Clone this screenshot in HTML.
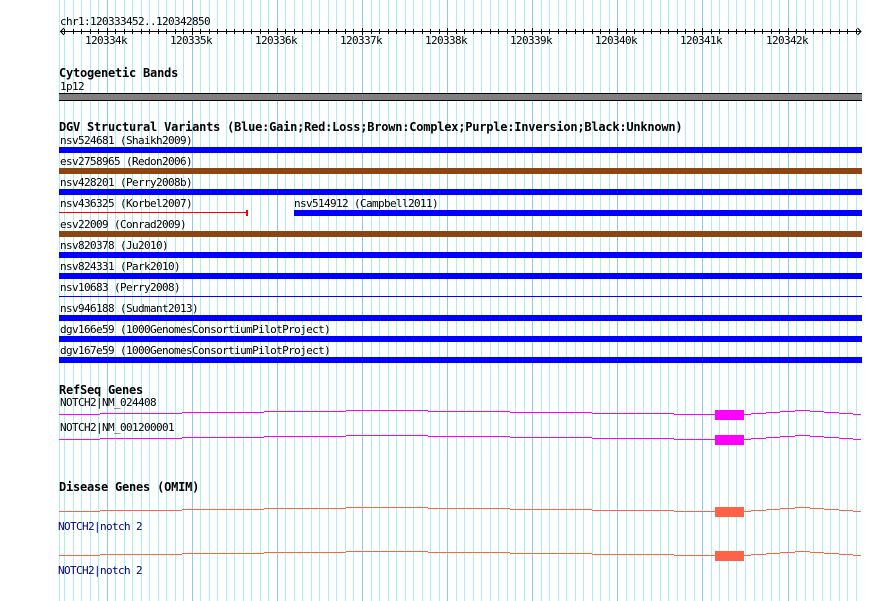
<!DOCTYPE html>
<html><head><meta charset="utf-8"><title>Genome browser</title>
<style>
html,body{margin:0;padding:0;background:#fff;width:890px;height:601px;overflow:hidden}
svg{display:block}
text{font-family:"DejaVu Sans Mono","Liberation Mono",monospace;font-size:11px;letter-spacing:-.62px;fill:#000;white-space:pre}
.b{font-weight:bold;font-size:12px;letter-spacing:-.22px}
.n{fill:#000080}
</style></head><body>
<svg width="890" height="601" viewBox="0 0 890 601" xmlns="http://www.w3.org/2000/svg">
<g shape-rendering="crispEdges" fill="none">
<path stroke="#afeeee" d="M59.5 0V601M64.5 0V601M73.5 0V601M81.5 0V601M90.5 0V601M98.5 0V601M115.5 0V601M124.5 0V601M132.5 0V601M141.5 0V601M149.5 0V601M158.5 0V601M166.5 0V601M175.5 0V601M183.5 0V601M200.5 0V601M209.5 0V601M217.5 0V601M226.5 0V601M234.5 0V601M243.5 0V601M251.5 0V601M260.5 0V601M268.5 0V601M285.5 0V601M294.5 0V601M302.5 0V601M311.5 0V601M319.5 0V601M328.5 0V601M336.5 0V601M345.5 0V601M353.5 0V601M371.5 0V601M379.5 0V601M388.5 0V601M396.5 0V601M405.5 0V601M413.5 0V601M422.5 0V601M430.5 0V601M439.5 0V601M456.5 0V601M464.5 0V601M473.5 0V601M481.5 0V601M490.5 0V601M498.5 0V601M507.5 0V601M515.5 0V601M524.5 0V601M541.5 0V601M549.5 0V601M558.5 0V601M566.5 0V601M575.5 0V601M583.5 0V601M592.5 0V601M600.5 0V601M609.5 0V601M626.5 0V601M634.5 0V601M643.5 0V601M651.5 0V601M660.5 0V601M668.5 0V601M677.5 0V601M685.5 0V601M694.5 0V601M711.5 0V601M719.5 0V601M728.5 0V601M736.5 0V601M745.5 0V601M754.5 0V601M762.5 0V601M771.5 0V601M779.5 0V601M796.5 0V601M805.5 0V601M813.5 0V601M822.5 0V601M830.5 0V601M839.5 0V601M847.5 0V601M856.5 0V601"/>
<path stroke="#87ceeb" d="M107.5 0V601M192.5 0V601M277.5 0V601M362.5 0V601M447.5 0V601M532.5 0V601M617.5 0V601M702.5 0V601M788.5 0V601"/>

<!-- ruler -->
<path stroke="#000" d="M60 31.5H861M64.5 29V34M73.5 29V34M81.5 29V34M90.5 29V34M98.5 29V34M107.5 28V35M115.5 29V34M124.5 29V34M132.5 29V34M141.5 29V34M149.5 29V34M158.5 29V34M166.5 29V34M175.5 29V34M183.5 29V34M192.5 28V35M200.5 29V34M209.5 29V34M217.5 29V34M226.5 29V34M234.5 29V34M243.5 29V34M251.5 29V34M260.5 29V34M268.5 29V34M277.5 28V35M285.5 29V34M294.5 29V34M302.5 29V34M311.5 29V34M319.5 29V34M328.5 29V34M336.5 29V34M345.5 29V34M353.5 29V34M362.5 28V35M371.5 29V34M379.5 29V34M388.5 29V34M396.5 29V34M405.5 29V34M413.5 29V34M422.5 29V34M430.5 29V34M439.5 29V34M447.5 28V35M456.5 29V34M464.5 29V34M473.5 29V34M481.5 29V34M490.5 29V34M498.5 29V34M507.5 29V34M515.5 29V34M524.5 29V34M532.5 28V35M541.5 29V34M549.5 29V34M558.5 29V34M566.5 29V34M575.5 29V34M583.5 29V34M592.5 29V34M600.5 29V34M609.5 29V34M617.5 28V35M626.5 29V34M634.5 29V34M643.5 29V34M651.5 29V34M660.5 29V34M668.5 29V34M677.5 29V34M685.5 29V34M694.5 29V34M702.5 28V35M711.5 29V34M719.5 29V34M728.5 29V34M736.5 29V34M745.5 29V34M754.5 29V34M762.5 29V34M771.5 29V34M779.5 29V34M788.5 28V35M796.5 29V34M805.5 29V34M813.5 29V34M822.5 29V34M830.5 29V34M839.5 29V34M847.5 29V34M856.5 29V34"/>
</g>
<path fill="none" stroke="#000" d="M64 28L60.5 31.5L64 35M857.5 28L861 31.5L857.5 35"/>

<g shape-rendering="crispEdges">
<!-- band -->
<rect x="59" y="94" width="803" height="7" fill="#808080"/>
<rect x="59" y="93" width="803" height="1" fill="#000"/>
<rect x="59" y="100" width="803" height="1" fill="#000"/>

<!-- DGV bars -->
<g fill="#0000ff">
<rect x="59" y="147" width="803" height="6"/>
<rect x="59" y="189" width="803" height="6"/>
<rect x="294" y="210" width="568" height="6"/>
<rect x="59" y="252" width="803" height="6"/>
<rect x="59" y="273" width="803" height="6"/>
<rect x="59" y="296" width="803" height="1"/>
<rect x="59" y="315" width="803" height="6"/>
<rect x="59" y="336" width="803" height="6"/>
<rect x="59" y="357" width="803" height="6"/>
</g>
<g fill="#8b4513">
<rect x="59" y="168" width="803" height="6"/>
<rect x="59" y="231" width="803" height="6"/>
</g>
<rect x="59" y="212" width="188" height="1" fill="#ff0000"/>
<rect x="246" y="210" width="2" height="6" fill="#ff0000"/>

<!-- RefSeq -->
<g fill="none" stroke="#ff00ff">
<path d="M59 414.5H100M100 413.5H182M182 412.5H264M264 411.5H346M346 410.5H428M428 411.5H510M510 412.5H592M592 413.5H674M674 414.5H715M744 414.5H751M751 413.5H766M766 412.5H780M780 411.5H795M795 410.5H810M810 411.5H824M824 412.5H839M839 413.5H853M853 414.5H861"/>
<path d="M59 439.5H100M100 438.5H182M182 437.5H264M264 436.5H346M346 435.5H428M428 436.5H510M510 437.5H592M592 438.5H674M674 439.5H715M744 439.5H751M751 438.5H766M766 437.5H780M780 436.5H795M795 435.5H810M810 436.5H824M824 437.5H839M839 438.5H853M853 439.5H861"/>
</g>
<rect x="715" y="410" width="29" height="10" fill="#ff00ff"/>
<rect x="715" y="435" width="29" height="10" fill="#ff00ff"/>

<!-- OMIM -->
<g fill="none" stroke="#ff6347">
<path d="M59 511.5H100M100 510.5H182M182 509.5H264M264 508.5H346M346 507.5H428M428 508.5H510M510 509.5H592M592 510.5H674M674 511.5H715M744 511.5H751M751 510.5H766M766 509.5H780M780 508.5H795M795 507.5H810M810 508.5H824M824 509.5H839M839 510.5H853M853 511.5H861"/>
<path d="M59 555.5H100M100 554.5H182M182 553.5H264M264 552.5H346M346 551.5H428M428 552.5H510M510 553.5H592M592 554.5H674M674 555.5H715M744 555.5H751M751 554.5H766M766 553.5H780M780 552.5H795M795 551.5H810M810 552.5H824M824 553.5H839M839 554.5H853M853 555.5H861"/>
</g>
<rect x="715" y="507" width="29" height="10" fill="#ff6347"/>
<rect x="715" y="551" width="29" height="10" fill="#ff6347"/>
</g>

<!-- text -->
<text x="60" y="25">chr1:120333452..120342850</text>
<text x="85" y="44">120334k</text>
<text x="170" y="44">120335k</text>
<text x="255" y="44">120336k</text>
<text x="340" y="44">120337k</text>
<text x="425" y="44">120338k</text>
<text x="510" y="44">120339k</text>
<text x="595" y="44">120340k</text>
<text x="680" y="44">120341k</text>
<text x="766" y="44">120342k</text>

<text class="b" x="59" y="77">Cytogenetic Bands</text>
<text x="60" y="90">1p12</text>

<text class="b" x="59" y="131">DGV Structural Variants (Blue:Gain;Red:Loss;Brown:Complex;Purple:Inversion;Black:Unknown)</text>
<text x="60" y="144">nsv524681 (Shaikh2009)</text>
<text x="60" y="165">esv2758965 (Redon2006)</text>
<text x="60" y="186">nsv428201 (Perry2008b)</text>
<text x="60" y="207">nsv436325 (Korbel2007)</text>
<text x="294" y="207">nsv514912 (Campbell2011)</text>
<text x="60" y="228">esv22009 (Conrad2009)</text>
<text x="60" y="249">nsv820378 (Ju2010)</text>
<text x="60" y="270">nsv824331 (Park2010)</text>
<text x="60" y="291">nsv10683 (Perry2008)</text>
<text x="60" y="312">nsv946188 (Sudmant2013)</text>
<text x="60" y="333">dgv166e59 (1000GenomesConsortiumPilotProject)</text>
<text x="60" y="354">dgv167e59 (1000GenomesConsortiumPilotProject)</text>

<text class="b" x="59" y="394">RefSeq Genes</text>
<text x="60" y="406">NOTCH2|NM_024408</text>
<text x="60" y="431">NOTCH2|NM_001200001</text>

<text class="b" x="59" y="491">Disease Genes (OMIM)</text>
<text class="n" x="58" y="530">NOTCH2|notch 2</text>
<text class="n" x="58" y="574">NOTCH2|notch 2</text>
</svg>
</body></html>
